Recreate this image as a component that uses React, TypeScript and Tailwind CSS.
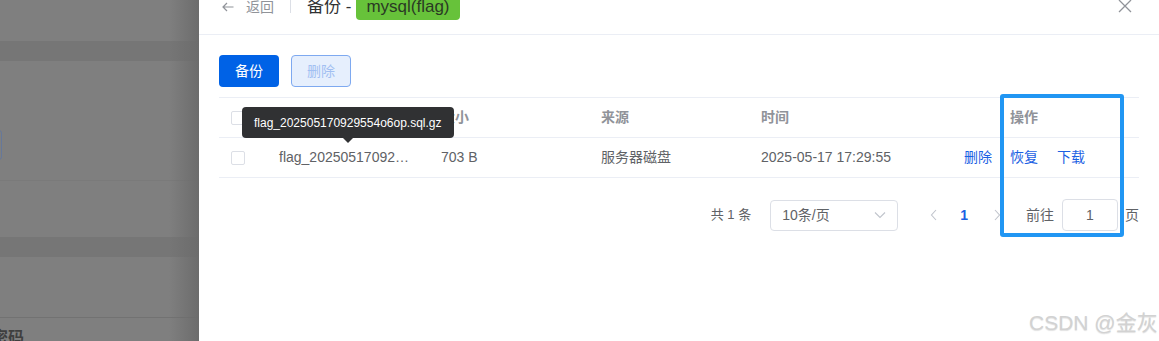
import React from "react";

const font = { fontFamily: '"Liberation Sans", "Noto Sans CJK SC", Arial, sans-serif' };

export default function App() {
  return (
    <div className="relative flex h-[341px] w-[1159px] overflow-hidden bg-white" style={font}>
      {/* left overlay */}
      <div className="relative flex h-full w-[199px] shrink-0 flex-col bg-[#7f7f7f]">
        <div className="h-[41px] shrink-0" />
        <div className="h-[20px] shrink-0 bg-[#767676]" />
        <div className="h-[69px] shrink-0" />
        <div className="flex h-[30px] shrink-0">
          <div className="-ml-[6px] h-[30px] w-[8px] rounded-[3px] border border-[#66789a]" />
        </div>
        <div className="h-[21px] shrink-0 border-b border-[#7a7a7a]" />
        <div className="h-[56px] shrink-0" />
        <div className="h-[20px] shrink-0 bg-[#767676]" />
        <div className="h-[61px] shrink-0 border-b border-[#727272]" />
        <div className="-ml-[8px] mt-[10px] text-[16px] font-bold leading-[20px] text-[#3f3f3f]">密码</div>
        <div className="pointer-events-none absolute inset-y-0 right-0 w-[30px] bg-gradient-to-r from-transparent to-[#6c6c6c]" />
      </div>

      {/* drawer */}
      <div className="relative flex flex-1 flex-col bg-white px-[20px]">
        {/* header */}
        <div className="-mx-[20px] h-[35px] border-b border-[#ebeef5] px-[20px]">
          <div className="-mt-[5px] flex h-[24px] items-center">
            <svg width="12" height="10" viewBox="0 0 12 10" className="ml-[3px]" fill="none" stroke="#909399" strokeWidth="1.2">
              <path d="M11.5 5H1M5 1L1 5l4 4" />
            </svg>
            <span className="ml-[12px] text-[14px] text-[#909399]">返回</span>
            <div className="ml-[16px] mt-[-8px] h-[20px] w-px bg-[#dcdfe6]" />
            <span className="ml-[16px] text-[17px] text-[#303133]">备份 -</span>
            <span className="ml-[5px] flex h-[26px] items-center rounded-[4px] bg-[#67c23a] px-[10px] text-[17px] text-[#2a3a24]">
              mysql(flag)
            </span>
            <div className="flex-1" />
            <svg width="14" height="14" viewBox="0 0 14 14" className="mr-[7px] mt-[-2px]" stroke="#909399" strokeWidth="1.3">
              <path d="M1 1l12 12M13 1L1 13" />
            </svg>
          </div>
        </div>

        {/* buttons */}
        <div className="mt-[20px] flex gap-[12px]">
          <button className="h-[32px] w-[60px] rounded-[4px] bg-[#0062e6] text-[14px] text-white">备份</button>
          <button className="h-[32px] w-[60px] rounded-[4px] border border-[#7ea9f0] bg-[#e6effd] text-[14px] text-[#a2bff2]">删除</button>
        </div>

        {/* table */}
        <div className="relative mt-[10px] w-[920px] border-t border-[#ebeef5]">
          <div className="flex h-[40px] items-center border-b border-[#ebeef5] text-[14px] font-bold text-[#909399]">
            <div className="w-[48px] pl-[12px]">
              <div className="h-[14px] w-[14px] rounded-[2px] border border-[#dcdfe6] bg-white" />
            </div>
            <div className="w-[162px] pl-[12px]">名称</div>
            <div className="w-[160px] pl-[12px]">大小</div>
            <div className="w-[160px] pl-[12px]">来源</div>
            <div className="w-[160px] pl-[12px]">时间</div>
            <div className="w-[89px]" />
            <div className="pl-[12px]">操作</div>
          </div>
          <div className="flex h-[40px] items-center border-b border-[#ebeef5] text-[14px] text-[#606266]">
            <div className="w-[48px] pl-[12px]">
              <div className="h-[14px] w-[14px] rounded-[2px] border border-[#dcdfe6] bg-white" />
            </div>
            <div className="w-[162px] truncate pl-[12px] pr-[18px]">flag_202505170929554o6op.sql.gz</div>
            <div className="w-[160px] pl-[12px]">703 B</div>
            <div className="w-[160px] pl-[12px]">服务器磁盘</div>
            <div className="w-[160px] pl-[12px]">2025-05-17 17:29:55</div>
            <div className="flex w-[89px] justify-end pr-[6px] text-[#1c61e3]">删除</div>
            <div className="flex gap-[19px] pl-[12px] text-[#1c61e3]">
              <span>恢复</span>
              <span>下载</span>
            </div>
          </div>

          {/* tooltip */}
          <div className="absolute left-[23px] top-[9px] flex h-[31px] items-center rounded-[4px] bg-[#303133] px-[12px] text-[12px] text-white">
            flag_202505170929554o6op.sql.gz
            <div className="absolute left-[100px] top-[30px] h-0 w-0 border-x-[6px] border-t-[6px] border-x-transparent border-t-[#303133]" />
          </div>
        </div>

        {/* pagination */}
        <div className="mt-[21px] flex w-[920px] items-center justify-end text-[13px] text-[#606266]">
          <span className="mr-[19px]">共 1 条</span>
          <div className="flex h-[31px] w-[128px] items-center justify-between rounded-[4px] border border-[#dcdfe6] px-[11px]">
            <span className="text-[14px]">10条/页</span>
            <svg width="12" height="8" viewBox="0 0 12 8" fill="none" stroke="#c0c4cc" strokeWidth="1.1">
              <path d="M1 1.5l5 5 5-5" />
            </svg>
          </div>
          <svg width="8" height="12" viewBox="0 0 8 12" className="ml-[32px]" fill="none" stroke="#c0c4cc" strokeWidth="1.1">
            <path d="M6 1L1.5 6 6 11" />
          </svg>
          <span className="ml-[22px] text-[14px] font-bold text-[#1c61e3]">1</span>
          <svg width="8" height="12" viewBox="0 0 8 12" className="ml-[25px]" fill="none" stroke="#c0c4cc" strokeWidth="1.1">
            <path d="M2 1l4.5 5L2 11" />
          </svg>
          <span className="ml-[25px] text-[14px]">前往</span>
          <div className="ml-[8px] flex h-[32px] w-[56px] items-center justify-center rounded-[4px] border border-[#dcdfe6] text-[14px]">1</div>
          <span className="ml-[7px] text-[14px]">页</span>
        </div>
        <div className="flex-1" />
      </div>

      {/* annotation box */}
      <div className="pointer-events-none absolute left-[1000px] top-[94px] h-[143px] w-[124px] rounded-[3px] border-[4px] border-[#2196f3]" />

      {/* watermark */}
      <div className="pointer-events-none absolute left-[1029px] top-[307px] text-[21px] text-[#d2d2d2] [text-shadow:0_1px_1px_rgba(0,0,0,0.12)]">
        CSDN @金灰
      </div>
    </div>
  );
}
